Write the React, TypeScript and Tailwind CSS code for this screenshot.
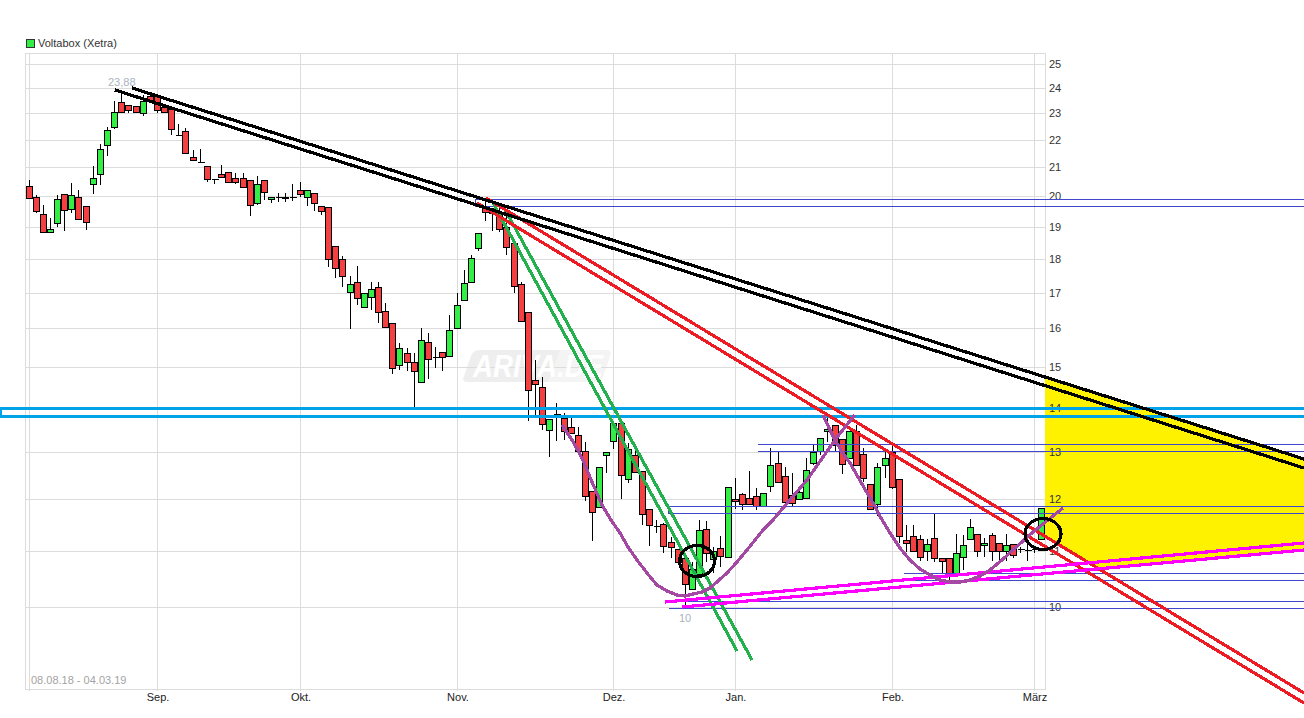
import React from 'react';

type Row = [number, number, number, number, number, 'r' | 'g'];

// candles as read from the chart: x, wick top, wick bottom, body top, body bottom, colour
// each block is in 3x coordinates relative to its own origin
const blockA: Row[] = [
  [88, 450, 503, 469, 503, 'r'], [109, 495, 548, 502, 544, 'r'], [130, 525, 607, 553, 607, 'r'],
  [151, 565, 607, 598, 607, 'g'], [172, 495, 590, 508, 580, 'g'], [193, 493, 602, 493, 541, 'r'],
  [214, 460, 548, 496, 538, 'g'], [235, 480, 568, 502, 568, 'r'], [259, 529, 600, 529, 577, 'r'],
  [280, 408, 492, 445, 463, 'g'], [301, 343, 465, 358, 433, 'g'], [322, 290, 378, 301, 346, 'g'],
  [343, 213, 298, 247, 292, 'g'], [364, 190, 250, 217, 247, 'r'], [385, 226, 250, 226, 241, 'r'],
  [409, 229, 250, 229, 247, 'r'], [430, 196, 257, 214, 250, 'g'], [451, 199, 220, 199, 214, 'r'],
  [472, 196, 250, 199, 241, 'r'], [493, 226, 250, 232, 247, 'r'], [514, 232, 315, 238, 298, 'r'],
  [535, 283, 315, 315, 315, 'r'], [556, 295, 370, 304, 370, 'r'], [580, 360, 392, 382, 391, 'r'],
  [601, 358, 397, 396, 396, 'r'], [622, 409, 455, 409, 448, 'r'], [643, 448, 463, 448, 448, 'r'],
  [664, 406, 440, 433, 440, 'r'], [685, 427, 460, 427, 457, 'r'], [706, 430, 463, 445, 457, 'r'],
  [730, 430, 475, 445, 472, 'r'], [751, 451, 557, 451, 526, 'r'], [772, 438, 524, 463, 520, 'g'],
  [793, 451, 510, 451, 487, 'r'], [814, 500, 520, 500, 508, 'g'], [835, 490, 515, 500, 500, 'g'],
  [856, 490, 515, 500, 505, 'g'], [877, 463, 512, 500, 500, 'g'], [901, 457, 502, 481, 493, 'r'],
  [922, 481, 527, 481, 502, 'g'], [943, 490, 542, 490, 520, 'r'], [964, 527, 554, 529, 544, 'r'],
];

const blockB: Row[] = [
  [25, 82, 260, 82, 238, 'r'], [46, 199, 293, 199, 265, 'r'], [67, 229, 320, 238, 289, 'r'],
  [91, 289, 448, 313, 337, 'g'], [112, 259, 376, 307, 355, 'r'], [133, 340, 385, 340, 382, 'g'],
  [154, 307, 391, 328, 352, 'g'], [175, 307, 430, 322, 397, 'r'], [196, 370, 445, 394, 442, 'r'],
  [217, 430, 581, 430, 565, 'r'], [238, 490, 570, 505, 556, 'g'], [262, 505, 572, 520, 547, 'r'],
  [283, 520, 680, 547, 574, 'r'], [304, 445, 610, 481, 607, 'g'], [325, 460, 596, 487, 538, 'r'],
  [346, 502, 565, 532, 532, 'r'], [367, 517, 574, 517, 532, 'r'], [388, 406, 529, 451, 529, 'g'],
  [412, 340, 445, 376, 445, 'g'], [433, 270, 364, 310, 361, 'g'], [454, 226, 307, 235, 307, 'g'],
  [475, 160, 212, 160, 205, 'g'], [496, 60, 123, 85, 97, 'r'], [517, 85, 152, 85, 100, 'r'],
  [538, 85, 157, 105, 148, 'r'], [559, 100, 226, 142, 202, 'r'], [583, 190, 340, 190, 319, 'r'],
  [604, 307, 424, 313, 424, 'r'], [625, 397, 722, 397, 631, 'r'], [646, 541, 710, 601, 613, 'r'],
  [667, 592, 750, 622, 733, 'r'],
];

const blockC: Row[] = [
  [88, 88, 200, 88, 121, 'g'], [109, 40, 152, 73, 73, 'g'], [133, 70, 150, 85, 124, 'r'],
  [154, 85, 130, 112, 130, 'r'], [175, 112, 185, 136, 184, 'r'], [196, 157, 332, 184, 319, 'r'],
  [217, 304, 452, 304, 367, 'r'], [238, 232, 355, 232, 352, 'g'], [259, 187, 248, 187, 196, 'g'],
  [280, 100, 178, 100, 154, 'g'], [304, 100, 326, 100, 256, 'r'], [325, 160, 280, 178, 268, 'g'],
  [346, 178, 247, 196, 247, 'r'], [367, 244, 404, 244, 373, 'r'], [388, 358, 467, 358, 406, 'r'],
  [409, 390, 430, 408, 408, 'r'], [430, 400, 490, 403, 469, 'r'], [454, 440, 505, 457, 472, 'r'],
  [475, 478, 520, 478, 517, 'r'], [496, 505, 650, 505, 583, 'r'], [517, 515, 598, 538, 598, 'g'],
  [538, 390, 553, 421, 553, 'g'], [559, 394, 515, 418, 490, 'r'], [580, 470, 550, 484, 508, 'g'],
  [601, 438, 532, 475, 499, 'r'], [625, 292, 502, 292, 502, 'g'], [646, 265, 358, 328, 334, 'r'],
  [667, 310, 360, 313, 343, 'r'], [688, 244, 345, 325, 343, 'r'], [709, 295, 360, 319, 347, 'r'],
  [730, 310, 347, 310, 347, 'g'],
];

const blockD: Row[] = [
  [61, 145, 275, 196, 259, 'g'], [85, 155, 250, 190, 247, 'r'], [106, 200, 310, 229, 307, 'r'],
  [127, 220, 322, 286, 310, 'r'], [148, 265, 298, 277, 298, 'g'], [169, 175, 296, 211, 295, 'g'],
  [190, 135, 196, 157, 190, 'g'], [211, 115, 165, 115, 154, 'g'], [232, 50, 125, 88, 94, 'g'],
  [256, 76, 157, 76, 136, 'r'], [277, 118, 223, 118, 193, 'r'], [298, 94, 178, 94, 175, 'g'],
  [319, 75, 196, 94, 196, 'r'], [340, 145, 245, 163, 235, 'r'], [361, 253, 328, 253, 328, 'r'],
  [382, 190, 348, 202, 313, 'g'], [406, 155, 235, 175, 196, 'g'], [427, 130, 268, 157, 262, 'r'],
  [448, 238, 430, 238, 409, 'r'], [469, 376, 457, 421, 430, 'r'], [490, 376, 457, 409, 454, 'r'],
  [511, 405, 484, 418, 472, 'r'], [532, 418, 484, 433, 454, 'g'], [553, 340, 485, 415, 475, 'r'],
  [577, 475, 520, 475, 484, 'r'], [598, 475, 540, 475, 520, 'r'], [619, 403, 525, 460, 520, 'g'],
  [640, 405, 510, 436, 472, 'g'], [661, 358, 418, 382, 418, 'g'], [682, 403, 470, 403, 454, 'r'],
  [703, 415, 472, 430, 436, 'g'], [727, 400, 484, 406, 454, 'r'], [748, 430, 484, 430, 454, 'r'],
  [769, 403, 484, 436, 454, 'g'], [790, 433, 475, 433, 466, 'r'], [811, 440, 460, 448, 448, 'r'],
  [832, 430, 484, 451, 451, 'r'], [853, 443, 460, 448, 448, 'r'], [874, 325, 418, 325, 418, 'g'],
];

const place = (rows: Row[], ox: number, oy: number) =>
  rows.map(([x, wt, wb, bt, bb, c]) => ({
    x: Math.floor(ox + x / 3) + 0.5,
    wt: Math.round(oy + wt / 3),
    wb: Math.round(oy + wb / 3),
    bt: Math.round(oy + bt / 3) + 0.5,
    bb: Math.round(oy + bb / 3) + 0.5,
    c,
  }));

const candles = [
  ...place(blockA, 0, 30),
  ...place(blockB, 320, 180),
  ...place(blockC, 520, 390),
  ...place(blockD, 750, 400),
];

const priceLabels = [
  [25, 64], [24, 88], [23, 113], [22, 140], [21, 167], [20, 196], [19, 227], [18, 259],
  [17, 293], [16, 328], [15, 367], [14, 408], [13, 452], [12, 499], [11, 551], [10, 607],
];

const months: [string, number][] = [
  ['Sep.', 157], ['Okt.', 300], ['Nov.', 457], ['Dez.', 613], ['Jan.', 735], ['Feb.', 892], ['März', 1034],
];

// blue lines: left x, y. the first two pairs are closed on the left
const boxes = [
  [475, 199, 206], [668, 506, 513],
];
const rules = [
  [758, 444], [758, 451], [904, 573], [904, 580], [669, 601], [669, 608],
];

const cup1 = '562,425 572,440 582,458 592,482 602,505 611,520 620,533 628,547 637,560 647,573 657,585 667,591 677,595 685,596 693,594 702,592 710,588 718,581 727,573 737,562 747,550 755,540 763,530 772,521 783,508 795,494 807,480 821,460 835,440 845,427 855,415';
const cup2 = '823,415 829,428 835,440 842,452 850,463 862,484 873,503 881,518 890,533 900,548 910,560 920,569 930,575 940,580 950,582 960,582 970,580 980,576 990,570 1002,560 1013,550 1023,541 1033,532 1048,520 1063,508';

function App() {
  return (
    <div className="w-[1304px] h-[718px] bg-white overflow-hidden font-['Liberation_Sans',sans-serif]">
      <div className="h-[53px] pl-[26px] pt-[37px] flex items-start gap-[3px]">
        <span className="w-[9px] h-[9px] mt-[2px] bg-[#33ee44] border border-[#333333]" />
        <span className="text-[11px] leading-[13px] text-[#333333]">Voltabox (Xetra)</span>
      </div>

      <svg width={1304} height={665} viewBox="0 53 1304 665" className="block" fontFamily="'Liberation Sans', sans-serif" fontSize={11}>
        {/* watermark */}
        <path d="M480 350 H606 Q612 350 610 356 L603 376 Q601 382 594 382 H468 Q461 382 464 376 L471 356 Q473 350 480 350 Z" fill="#eeeeee" />
        <path d="M560 350 H606 Q612 350 610 356 L603 376 Q601 382 594 382 H548 Z" fill="#f4f4f4" />

        {/* grid */}
        <g stroke="#dcdcdc" strokeWidth={1} shapeRendering="crispEdges">
          {priceLabels.map(([v, y]) => (
            <line key={v} x1={25} x2={1045} y1={y + 0.5} y2={y + 0.5} />
          ))}
          <line x1={25} x2={1045} y1={53.5} y2={53.5} />
          <line x1={25} x2={1045} y1={689.5} y2={689.5} />
          <line x1={25.5} x2={25.5} y1={53} y2={690} />
          <line x1={29.5} x2={29.5} y1={53} y2={691} />
          <line x1={1045.5} x2={1045.5} y1={53} y2={690} />
          {months.map(([m, x]) => (
            <line key={m} x1={x + 0.5} x2={x + 0.5} y1={53} y2={691} />
          ))}
        </g>

        <text x={538} y={377} fill="#ffffff" fontSize={31} fontWeight="bold" fontStyle="italic" textAnchor="middle" textLength={130} lengthAdjust="spacingAndGlyphs">ARIVA.DE</text>

        {/* target zone */}
        <polygon points="1045,377 1304,459 1304,550 1099,569 1045,536" fill="#fff200" shapeRendering="crispEdges" />

        {/* labels */}
        <g fill="#333333">
          {priceLabels.map(([v, y]) => (
            <text key={v} x={1049} y={y + 4}>{v}</text>
          ))}
        </g>
        <g fill="#222222" textAnchor="middle">
          {months.map(([m, x]) => (
            <text key={m} x={x + 1} y={701}>{m}</text>
          ))}
        </g>
        <text x={108} y={86} fill="#a9b3c1">23,88</text>
        <text x={685} y={622} fill="#a9b3c1" textAnchor="middle">10</text>
        <text x={31} y={684} fill="#a3a3a3">08.08.18 - 04.03.19</text>

        {/* candles */}
        <g shapeRendering="crispEdges" stroke="#000000" strokeWidth={1}>
          {candles.map((k, i) => (
            <g key={i}>
              <line x1={k.x} x2={k.x} y1={k.wt} y2={k.wb} />
              {k.bt === k.bb ? (
                <line x1={k.x - 3} x2={k.x + 4} y1={k.bt} y2={k.bt} />
              ) : (
                <rect x={k.x - 3} y={k.bt} width={6} height={k.bb - k.bt} fill={k.c === 'r' ? '#f44040' : '#33ee44'} />
              )}
            </g>
          ))}
        </g>

        {/* drawn trend lines */}
        <g fill="none" shapeRendering="crispEdges">
          <g stroke="#00a2e8" strokeWidth={3}>
            <path d="M1304 408.5 H0.5 V416.5 H1304" />
          </g>
          <g stroke="#3f48cc" strokeWidth={1}>
            {boxes.map(([x, a, b]) => (
              <path key={a} d={`M1304 ${a + 0.5} H${x + 0.5} V${b + 0.5} H1304`} />
            ))}
            {rules.map(([x, y]) => (
              <line key={y} x1={x} x2={1304} y1={y + 0.5} y2={y + 0.5} />
            ))}
          </g>
          <g stroke="#22b14c" strokeWidth={3.2}>
            <line x1={493} y1={203} x2={737} y2={651} />
            <line x1={503} y1={206} x2={752} y2={660} />
          </g>
          <g stroke="#ed1c24" strokeWidth={3.2}>
            <line x1={486} y1={198} x2={1304} y2={693} />
            <line x1={477} y1={203} x2={1304} y2={703} />
          </g>
          <g stroke="#000000" strokeWidth={3.2}>
            <line x1={132} y1={88} x2={1304} y2={459} />
            <line x1={115} y1={90} x2={1304} y2={468} />
          </g>
          <g stroke="#ff00ff" strokeWidth={3.2}>
            <line x1={665} y1={602} x2={1304} y2={543} />
            <line x1={682} y1={607} x2={1304} y2={550} />
          </g>
          <g stroke="#a349a4" strokeWidth={3.2} strokeLinejoin="round">
            <polyline points={cup1} />
            <polyline points={cup2} />
          </g>
          <g stroke="#000000" strokeWidth={3.2}>
            <ellipse cx={697} cy={561} rx={17.5} ry={15.5} />
            <ellipse cx={1043} cy={534} rx={18} ry={15.5} />
          </g>
        </g>
      </svg>
    </div>
  );
}

export default App;
